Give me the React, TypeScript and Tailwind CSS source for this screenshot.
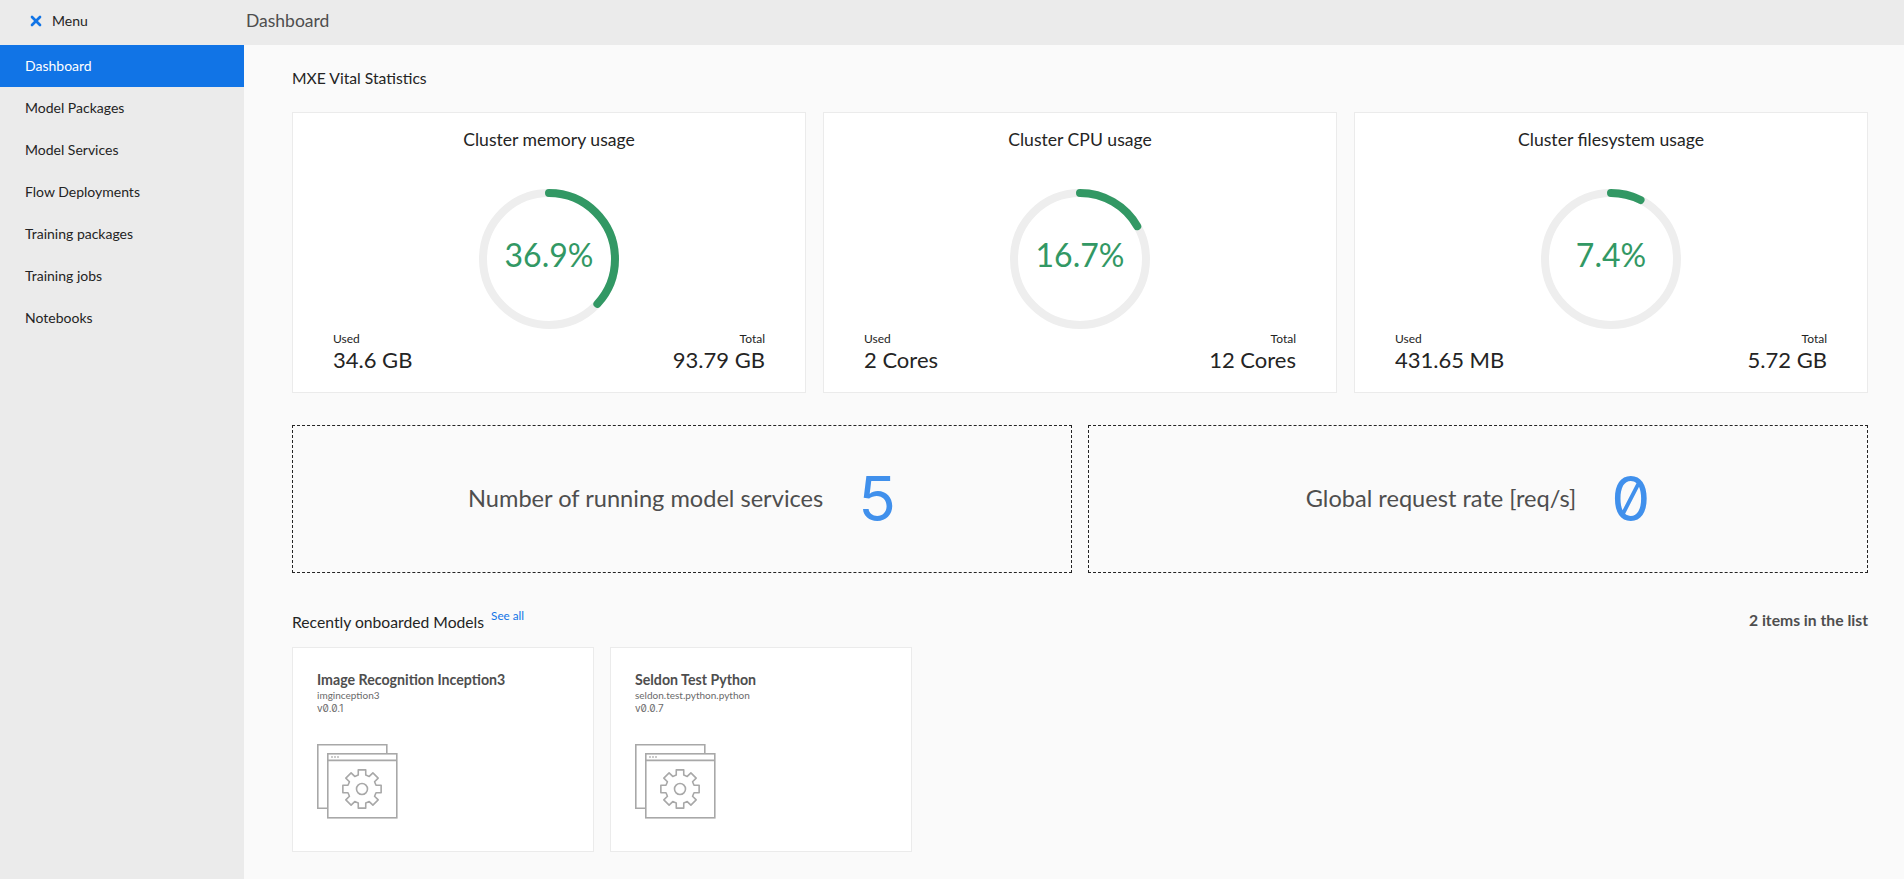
import { X } from "lucide-react";

const navItems = [
  "Dashboard",
  "Model Packages",
  "Model Services",
  "Flow Deployments",
  "Training packages",
  "Training jobs",
  "Notebooks",
];

const stats = [
  { title: "Cluster memory usage", percent: 36.9, used: "34.6 GB", total: "93.79 GB" },
  { title: "Cluster CPU usage", percent: 16.7, used: "2 Cores", total: "12 Cores" },
  { title: "Cluster filesystem usage", percent: 7.4, used: "431.65 MB", total: "5.72 GB" },
];

const models = [
  { name: "Image Recognition Inception3", id: "imginception3", version: "v0.0.1" },
  { name: "Seldon Test Python", id: "seldon.test.python.python", version: "v0.0.7" },
];

// 8 teeth gear outline, centred on 0,0
const gearPath = () => {
  const pt = (r: number, deg: number) => {
    const a = (deg * Math.PI) / 180;
    return `${(r * Math.cos(a)).toFixed(2)} ${(r * Math.sin(a)).toFixed(2)}`;
  };
  let d = "";
  for (let i = 0; i < 8; i++) {
    const c = i * 45 - 90;
    d += `${i === 0 ? "M" : "L"}${pt(14.5, c - 15)}L${pt(19.5, c - 11)}L${pt(19.5, c + 11)}L${pt(14.5, c + 15)}`;
  }
  return d + "Z";
};

function Gauge({ percent }: { percent: number }) {
  return (
    <div className="relative h-[140px] w-[140px]">
      <svg viewBox="0 0 140 140" className="h-full w-full -rotate-90">
        <circle cx="70" cy="70" r="66" fill="none" stroke="#eeeeee" strokeWidth="8" />
        <circle
          cx="70"
          cy="70"
          r="66"
          fill="none"
          stroke="#329864"
          strokeWidth="8"
          strokeLinecap="round"
          pathLength={100}
          strokeDasharray={`${percent} 100`}
        />
      </svg>
      <div className="absolute inset-0 flex items-center justify-center pb-[9px] text-[32px] text-[#329864]">
        {percent}%
      </div>
    </div>
  );
}

function StatCard({ title, percent, used, total }: (typeof stats)[number]) {
  return (
    <div className="h-[281px] border border-[#ebebeb] bg-white">
      <div className="pt-[15px] text-center text-[17.6px] leading-[24px] text-[#242424]">{title}</div>
      <div className="mt-[37px] flex justify-center">
        <Gauge percent={percent} />
      </div>
      <div className="mt-[2px] flex justify-between px-[40px]">
        <div>
          <div className="text-[12px] leading-[16px] text-[#242424]">Used</div>
          <div className="text-[22px] leading-[26px] text-[#242424]">{used}</div>
        </div>
        <div className="text-right">
          <div className="text-[12px] leading-[16px] text-[#242424]">Total</div>
          <div className="text-[22px] leading-[26px] text-[#242424]">{total}</div>
        </div>
      </div>
    </div>
  );
}

function PackageIcon() {
  return (
    <svg width="81" height="75" viewBox="0 0 81 75" fill="none" stroke="#a8a8a8" strokeWidth="1.6">
      <path d="M10 64.2H.8V.8h69v9" />
      <rect x="10.8" y="9.8" width="69" height="64" fill="#ffffff" />
      <path d="M10.8 16.4h69" />
      <path d="M14 13h2M17 13h2M20 13h2" stroke="#bbbbbb" />
      <g transform="translate(45 45)">
        <circle r="5.5" />
        <path d={gearPath()} strokeLinejoin="round" />
      </g>
    </svg>
  );
}

function ModelCard({ name, id, version }: (typeof models)[number]) {
  return (
    <div className="h-[205px] w-[302px] border border-[#ebebeb] bg-white pl-[24px] pt-[23px]">
      <div className="text-[14.2px] font-bold leading-[18px] text-[#4e4e4e]">{name}</div>
      <div className="text-[10px] leading-[13px] text-[#6a6a6a]">{id}</div>
      <div className="font-['Inter',sans-serif] text-[10px] leading-[13px] text-[#6a6a6a] slashed-zero">{version}</div>
      <div className="mt-[29px]">
        <PackageIcon />
      </div>
    </div>
  );
}

function Highlight({ label, value }: { label: string; value: string }) {
  return (
    <div className="flex h-[148px] items-center justify-center gap-[35px] border border-dashed border-[#242424]">
      <span className="text-[23.6px] text-[#4e4e4e]">{label}</span>
      <span className="font-['Inter',sans-serif] text-[62px] leading-none text-[#4090ec] slashed-zero">
        {value}
      </span>
    </div>
  );
}

export default function App() {
  return (
    <div className="flex h-screen flex-col overflow-hidden bg-[#fafafa] font-['Lato','Liberation_Sans',sans-serif]">
      <header className="flex h-[45px] shrink-0 items-center bg-[#ebebeb]">
        <div className="flex w-[246px] items-center pb-[3px] pl-[28px] text-[14px] text-[#242424]">
          <X className="h-[16px] w-[16px] text-[#1174e6]" strokeWidth={4} />
          <span className="ml-[8px] pb-[1px]">Menu</span>
        </div>
        <h1 className="pb-[3px] text-[17.5px] font-normal text-[#4e4e4e]">Dashboard</h1>
      </header>

      <div className="flex min-h-0 flex-1">
        <nav className="w-[244px] shrink-0 bg-[#ebebeb]">
          {navItems.map((item, i) => (
            <div
              key={item}
              className={`flex h-[42px] items-center pb-[2px] pl-[25px] text-[14px] ${
                i === 0 ? "bg-[#1174e6] text-white" : "text-[#242424]"
              }`}
            >
              {item}
            </div>
          ))}
        </nav>

        <main className="flex-1 pl-[48px] pr-[36px] pt-[23px]">
          <h2 className="text-[15.7px] font-normal leading-[20px] text-[#242424]">MXE Vital Statistics</h2>

          <div className="mt-[24px] grid grid-cols-3 gap-[17px]">
            {stats.map((s) => (
              <StatCard key={s.title} {...s} />
            ))}
          </div>

          <div className="mt-[32px] grid grid-cols-2 gap-[16px]">
            <Highlight label="Number of running model services" value="5" />
            <Highlight label="Global request rate [req/s]" value="0" />
          </div>

          <div className="mt-[35px] flex items-start justify-between">
            <div className="flex items-start text-[15.7px] text-[#242424]">
              <span className="mt-[4px] leading-[20px]">Recently onboarded Models</span>
              <a className="ml-[7px] text-[11.7px] leading-[14px] text-[#1174e6]">See all</a>
            </div>
            <span className="mt-[2px] text-[15.7px] font-bold leading-[20px] text-[#4e4e4e]">2 items in the list</span>
          </div>

          <div className="mt-[15px] flex gap-[16px]">
            {models.map((m) => (
              <ModelCard key={m.name} {...m} />
            ))}
          </div>
        </main>
      </div>
    </div>
  );
}
